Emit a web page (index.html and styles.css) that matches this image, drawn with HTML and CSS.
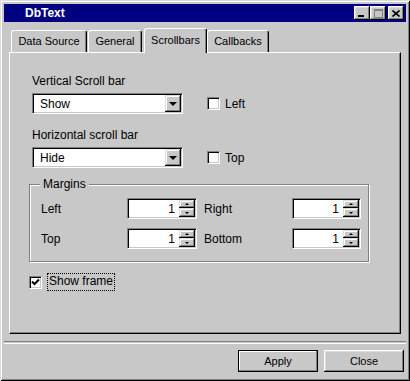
FILE: index.html
```html
<html lang="en">
<head>
    <meta charset="UTF-8">
    <title>DbText</title>
    <link rel="stylesheet" href="styles.css">
</head>
<body>
    <div class="window">
        <div class="titlebar">
            <span class="title">DbText</span>
            <div class="title-buttons">
                <div class="tbtn">
                    <svg width="8" height="7" viewBox="0 0 8 7"><rect x="0" y="5" width="6" height="2" fill="#000"/></svg>
                </div>
                <div class="tbtn">
                    <svg width="9" height="9" viewBox="0 0 9 9"><rect x="0.5" y="0.5" width="8" height="8" fill="none" stroke="#808080"/><rect x="0" y="0" width="9" height="2" fill="#808080"/></svg>
                </div>
                <div class="tbtn close">
                    <svg width="8" height="7" viewBox="0 0 8 7"><path d="M0.5 0.5 L7.5 6.5 M7.5 0.5 L0.5 6.5" stroke="#000" stroke-width="1.6" fill="none"/></svg>
                </div>
            </div>
        </div>

        <div class="client">
            <div class="tabs">
                <div class="tab tab-ds">Data Source</div>
                <div class="tab tab-gen">General</div>
                <div class="tab tab-sb active">Scrollbars</div>
                <div class="tab tab-cb">Callbacks</div>
            </div>
            <div class="panel">
                <div class="label">Vertical Scroll bar</div>
                <div class="row">
                    <div class="combo"><span class="combo-text">Show</span><span class="drop"><span class="arrow"></span></span></div>
                    <div class="check"><span class="box"></span><span>Left</span></div>
                </div>
                <div class="label second">Horizontal scroll bar</div>
                <div class="row">
                    <div class="combo"><span class="combo-text">Hide</span><span class="drop"><span class="arrow"></span></span></div>
                    <div class="check"><span class="box"></span><span>Top</span></div>
                </div>

                <div class="group">
                    <span class="legend">Margins</span>
                    <div class="margins">
                        <span class="mlabel">Left</span>
                        <div class="spin"><span class="spin-val">1</span><span class="spin-btns"><span class="sbtn"><span class="up"></span></span><span class="sbtn"><span class="down"></span></span></span></div>
                        <span class="mlabel">Right</span>
                        <div class="spin"><span class="spin-val">1</span><span class="spin-btns"><span class="sbtn"><span class="up"></span></span><span class="sbtn"><span class="down"></span></span></span></div>
                        <span class="mlabel">Top</span>
                        <div class="spin"><span class="spin-val">1</span><span class="spin-btns"><span class="sbtn"><span class="up"></span></span><span class="sbtn"><span class="down"></span></span></span></div>
                        <span class="mlabel">Bottom</span>
                        <div class="spin"><span class="spin-val">1</span><span class="spin-btns"><span class="sbtn"><span class="up"></span></span><span class="sbtn"><span class="down"></span></span></span></div>
                    </div>
                </div>

                <div class="check frame-check">
                    <span class="box">
                        <svg width="9" height="9" viewBox="0 0 9 9"><path d="M1 3.5 L3.5 6 L8 1.5" stroke="#000" stroke-width="2" fill="none"/></svg>
                    </span>
                    <span class="focus">Show frame</span>
                </div>
            </div>
        </div>

        <div class="separator"></div>
        <div class="footer">
            <div class="btn default"><span>Apply</span></div>
            <div class="btn">Close</div>
        </div>
    </div>
</body>
</html>
```

FILE: styles.css
```css
body {
    margin: 0;
    padding: 0;
    background-color: #c8c8c8;
    font-family: "Liberation Sans", Arial, sans-serif;
    font-size: 11px;
    color: #000;
}
.window {
    box-sizing: border-box;
    width: 410px;
    height: 381px;
    padding: 4px;
    background-color: #c8c8c8;
    box-shadow: inset 1px 1px #dcdcdc, inset -1px -1px #000, inset 2px 2px #fff, inset -2px -2px #808080;
}
.titlebar {
    height: 18px;
    background-color: #000080;
    display: flex;
    align-items: center;
    justify-content: space-between;
}
.title {
    color: #fff;
    font-weight: bold;
    font-size: 12px;
    margin-left: 21px;
}
.title-buttons {
    display: flex;
    margin-right: 2px;
}
.tbtn {
    box-sizing: border-box;
    width: 16px;
    height: 14px;
    display: flex;
    align-items: center;
    justify-content: center;
    background-color: #c8c8c8;
    box-shadow: inset -1px -1px #000, inset 1px 1px #fff, inset -2px -2px #808080, inset 2px 2px #dcdcdc;
}
.tbtn.close {
    margin-left: 2px;
}
.client {
    padding: 6px 5px 0 5px;
}
.tabs {
    display: flex;
    align-items: flex-end;
    height: 24px;
    padding-left: 2px;
}
.tab {
    box-sizing: border-box;
    height: 22px;
    padding-top: 4px;
    text-align: center;
    background-color: #c8c8c8;
    border-top: 1px solid #fff;
    border-left: 1px solid #fff;
    border-right: 1px solid #000;
    border-radius: 3px 3px 0 0;
    box-shadow: inset -1px 0 #808080;
}
.tab-ds { width: 76px; }
.tab-gen { width: 54px; margin-left: 1px; }
.tab-sb { width: 63px; margin-left: 2px; }
.tab-cb { width: 62px; }
.tab.active {
    height: 25px;
    padding-top: 5px;
    margin-bottom: -1px;
    position: relative;
    z-index: 1;
}
.panel {
    box-sizing: border-box;
    height: 282px;
    padding: 21px 0 0 22px;
    border-top: 1px solid #fff;
    border-left: 1px solid #fff;
    border-right: 1px solid #000;
    border-bottom: 1px solid #000;
    box-shadow: inset -1px -1px #808080;
}
.label {
    font-size: 12px;
    line-height: 14px;
}
.label.second {
    margin-top: 14px;
}
.row {
    display: flex;
    align-items: center;
    margin-top: 5px;
}
.combo {
    box-sizing: border-box;
    width: 151px;
    height: 21px;
    padding: 2px;
    display: flex;
    align-items: center;
    justify-content: space-between;
    background-color: #fff;
    border: 1px solid;
    border-color: #808080 #fff #fff #808080;
    box-shadow: inset 1px 1px #000, inset -1px -1px #c8c8c8;
}
.combo-text {
    padding-left: 5px;
    font-size: 12px;
}
.drop, .sbtn {
    box-sizing: border-box;
    display: flex;
    align-items: center;
    justify-content: center;
    background-color: #c8c8c8;
    box-shadow: inset -1px -1px #000, inset 1px 1px #dcdcdc, inset -2px -2px #808080, inset 2px 2px #fff;
}
.drop {
    width: 16px;
    height: 17px;
    margin-right: -1px;
}
.arrow {
    width: 0;
    height: 0;
    border-left: 4px solid transparent;
    border-right: 4px solid transparent;
    border-top: 4px solid #000;
}
.check {
    display: flex;
    align-items: center;
    gap: 5px;
    margin-left: 24px;
    font-size: 12px;
}
.box {
    box-sizing: border-box;
    width: 13px;
    height: 13px;
    display: flex;
    align-items: center;
    justify-content: center;
    background-color: #fff;
    border: 1px solid;
    border-color: #808080 #fff #fff #808080;
    box-shadow: inset 1px 1px #000, inset -1px -1px #c8c8c8;
}
.group {
    position: relative;
    box-sizing: border-box;
    width: 340px;
    height: 78px;
    margin: 16px 0 0 -3px;
    padding: 13px 0 0 11px;
    border: 1px solid #808080;
    box-shadow: 1px 1px #fff, inset 1px 1px #fff;
}
.legend {
    position: absolute;
    top: -8px;
    left: 10px;
    padding: 0 3px;
    background-color: #c8c8c8;
    font-size: 12px;
}
.margins {
    display: grid;
    grid-template-columns: 86px 70px 95px 69px;
    row-gap: 9px;
    align-items: center;
    font-size: 12px;
}
.margins .mlabel:nth-child(3),
.margins .mlabel:nth-child(7) {
    padding-left: 7px;
}
.spin {
    box-sizing: border-box;
    height: 21px;
    padding: 2px;
    display: flex;
    align-items: center;
    justify-content: flex-end;
    background-color: #fff;
    border: 1px solid;
    border-color: #808080 #fff #fff #808080;
    box-shadow: inset 1px 1px #000, inset -1px -1px #c8c8c8;
}
.spin-val {
    margin-right: 4px;
    font-size: 12px;
}
.spin-btns {
    display: flex;
    flex-direction: column;
    margin-right: -1px;
}
.sbtn {
    width: 16px;
    height: 8px;
}
.sbtn + .sbtn {
    height: 9px;
}
.up {
    width: 0;
    height: 0;
    border-left: 2px solid transparent;
    border-right: 2px solid transparent;
    border-bottom: 2px solid #000;
}
.down {
    width: 0;
    height: 0;
    border-left: 2px solid transparent;
    border-right: 2px solid transparent;
    border-top: 2px solid #000;
}
.frame-check {
    margin: 11px 0 0 -3px;
    gap: 5px;
}
.focus {
    padding: 1px 1px 2px 1px;
    border: 1px dotted #000;
    line-height: 13px;
}
.separator {
    height: 1px;
    margin-top: 7px;
    border-top: 1px solid #808080;
    border-bottom: 1px solid #fff;
}
.footer {
    display: flex;
    justify-content: flex-end;
    gap: 6px;
    margin-top: 6px;
    padding-right: 2px;
}
.btn {
    box-sizing: border-box;
    width: 80px;
    height: 22px;
    display: flex;
    align-items: center;
    justify-content: center;
    font-size: 11px;
    background-color: #c8c8c8;
    box-shadow: inset -1px -1px #000, inset 1px 1px #fff, inset -2px -2px #808080, inset 2px 2px #dcdcdc;
}
.btn.default {
    border: 1px solid #000;
    box-shadow: inset -1px -1px #808080, inset 1px 1px #fff;
}
```
